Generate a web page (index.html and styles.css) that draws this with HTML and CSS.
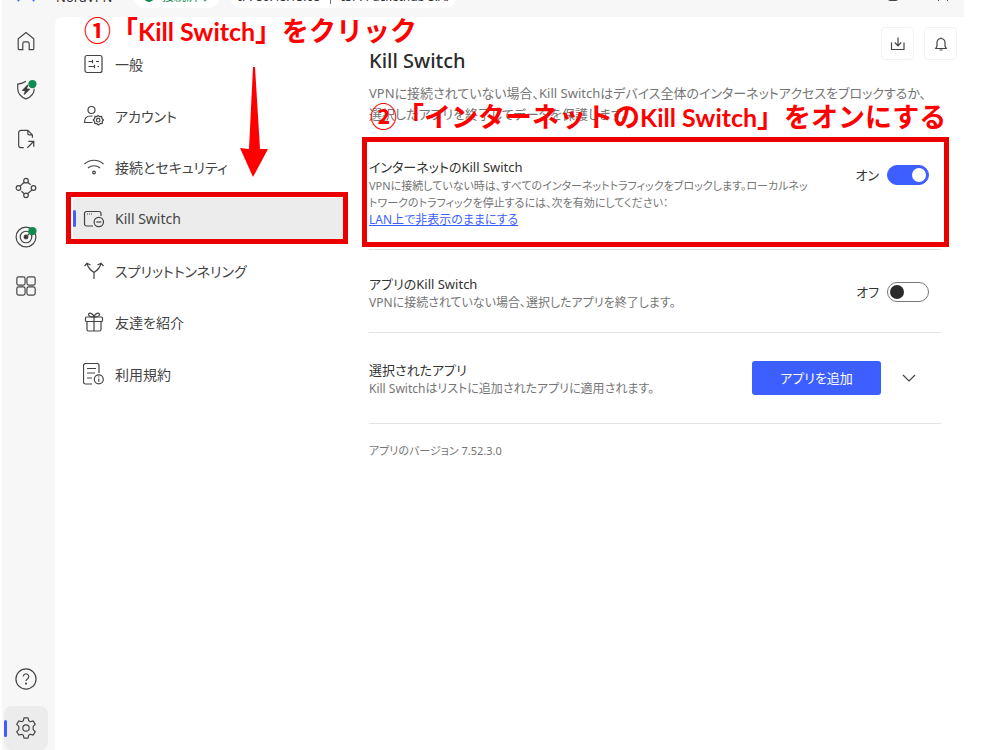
FILE: index.html
```
<!DOCTYPE html>
<html lang="ja">
<head>
    <meta charset="utf-8">
    <title>Kill Switch</title>
    <link rel="stylesheet" href="styles.css">
</head>
<body>
    <div class="window">
        <header class="titlebar">
            <svg class="logo" width="20" height="20" viewBox="0 0 20 20" fill="none" stroke="#3e5fff" stroke-width="2"><path d="M3 19A9 9 0 1 1 17 19M6 15l4-6 4 6"/></svg>
            <span class="brand">NordVPN</span>
            <span class="pill pill-status"><i class="dot"></i>接続済み</span>
            <span class="pill pill-ip"><span>IP: 86.48.13.68</span><i class="sep"></i><span>ISP: Packethub S.A.</span></span>
            <button class="win-btn" aria-label="最大化"><svg width="12" height="12" viewBox="0 0 12 12" fill="none" stroke="#444"><rect x="1.5" y="1.5" width="9" height="9" rx="1"/></svg></button>
            <button class="win-btn" aria-label="閉じる"><svg width="12" height="12" viewBox="0 0 12 12" fill="none" stroke="#444"><path d="M1 1l10 10M11 1L1 11"/></svg></button>
        </header>

        <div class="body">
            <aside class="sidebar">
                <button class="side-btn" aria-label="ホーム">
                    <svg width="24" height="24" viewBox="0 0 24 24"><path d="M3.500 20.500V9.700L12 2.800l8.500 6.900V20.500a.9.9 0 0 1-.9.9H15.500V15a2 2 0 0 0-2-2h-3a2 2 0 0 0-2 2v6.400H4.400a.9.9 0 0 1-.9-.9z"/></svg>
                </button>
                <button class="side-btn" aria-label="脅威対策">
                    <svg width="24" height="24" viewBox="0 0 24 24"><path d="M12 2.500c-2.500 1.800-5.500 2.800-9 3v5c0 5.200 3.600 9 9 11.200 5.400-2.200 9-6 9-11.200"/><path d="M14 6.500l-5.500 5.800 3.200.5-1.700 4 5.500-5.600-3.300-.6z" fill="#333"/><circle class="badge" cx="19" cy="5.500" r="4.500"/></svg>
                </button>
                <button class="side-btn" aria-label="ファイル共有">
                    <svg width="24" height="24" viewBox="0 0 24 24"><path d="M9.500 21.500h-3a2.500 2.500 0 0 1-2.500-2.500V5a2.500 2.500 0 0 1 2.500-2.500h7.500l5 5v3M14 2.500v3.500a1.500 1.500 0 0 0 1.500 1.500H19M13.500 21.500l7-7M14.500 14.500h6v6"/></svg>
                </button>
                <button class="side-btn" aria-label="メッシュネット">
                    <svg width="24" height="24" viewBox="0 0 24 24"><circle cx="12" cy="4" r="2.500"/><circle cx="3.800" cy="12" r="2.500"/><circle cx="20.200" cy="12" r="2.500"/><circle cx="12" cy="20" r="2.500"/><path d="M10.100 5.700L5.500 10M13.900 5.700L17 8.500M18.500 14l-4.700 4.300M7 15.500l3.100 2.800"/></svg>
                </button>
                <button class="side-btn" aria-label="ダークウェブモニター">
                    <svg width="24" height="24" viewBox="0 0 24 24"><circle cx="12" cy="12" r="10.800"/><circle cx="12" cy="12" r="6.300"/><circle cx="12" cy="12" r="2" fill="#333"/><path d="M12 12l5-5"/><circle class="badge" cx="19" cy="5.500" r="4.500"/></svg>
                </button>
                <button class="side-btn" aria-label="すべての機能">
                    <svg width="24" height="24" viewBox="0 0 24 24"><rect x="2" y="2" width="9" height="9" rx="2"/><rect x="13" y="2" width="9" height="9" rx="2"/><rect x="2" y="13" width="9" height="9" rx="2"/><rect x="13" y="13" width="9" height="9" rx="2"/></svg>
                </button>
                <button class="side-btn side-help" aria-label="ヘルプ">
                    <svg width="24" height="24" viewBox="0 0 24 24"><circle cx="12" cy="12" r="11"/><path d="M9 9.300a3 3 0 1 1 4.500 2.600c-1 .6-1.500 1.100-1.500 2.400"/><circle cx="12" cy="17" r=".5" fill="#333"/></svg>
                </button>
                <button class="side-btn side-active" aria-label="設定">
                    <svg width="24" height="24" viewBox="0 0 24 24"><circle cx="12" cy="12" r="3.500"/><path d="M9.800 1h4.400l.8 3.200 1.700 1 3.200-.9 2.200 3.700-2.300 2.200v3.600l2.300 2.200-2.200 3.700-3.200-.9-1.700 1-.8 3.200H9.800L9 19.800l-1.700-1-3.200.9L1.900 16l2.300-2.200v-3.600L1.900 8l2.200-3.700 3.200.9 1.700-1z" stroke-linejoin="round"/></svg>
                </button>
            </aside>

            <div class="panel">
                <nav class="menu">
                    <a class="menu-item" href="#general">
                        <svg width="22" height="22" viewBox="0 0 22 22"><rect x="2" y="2.500" width="17" height="17" rx="2"/><path d="M5.500 8.500h4M13 8.500h3M9.500 6.800v3.400M5.500 13.500h6M14.500 13.500h1.500M11.500 11.800v3.400"/></svg>
                        一般
                    </a>
                    <a class="menu-item" href="#account">
                        <svg width="22" height="22" viewBox="0 0 22 22"><circle cx="8.500" cy="5" r="3.500"/><path d="M9.500 17.500H1.500c0-4.500 2.500-6.500 6-6.500 1 0 1.500.1 2 .3"/><path d="M15 10.500l1.600 1.200 2-.2.4 2 1.500 1.500-1.300 1.500v2l-2 .1-1.700 1.400-1.700-1.300-2-.2-.2-2L10.200 15l1.500-1.500.3-2 2 .1z"/><circle cx="15.200" cy="15.200" r="1.800"/></svg>
                        アカウント
                    </a>
                    <a class="menu-item" href="#security">
                        <svg width="22" height="22" viewBox="0 0 22 22"><path d="M1.500 8c5.300-5 13.700-5 19 0M5 12c3.500-3 8.500-3 12 0"/><circle cx="11" cy="16.500" r="1.300"/></svg>
                        接続とセキュリティ
                    </a>
                    <a class="menu-item menu-active" href="#killswitch">
                        <svg width="22" height="22" viewBox="0 0 22 22"><path d="M10 18H3.500a2 2 0 0 1-2-2V5.500a2 2 0 0 1 2-2h12.500a2 2 0 0 1 2 2V8"/><path d="M4 6h5" stroke-dasharray="1 1"/><circle cx="15.800" cy="14" r="4.700"/><path d="M13.300 14h5"/></svg>
                        Kill Switch
                        <span class="mark mark-menu"></span>
                    </a>
                    <a class="menu-item" href="#split">
                        <svg width="22" height="22" viewBox="0 0 22 22"><path d="M11 19v-6.500C8 10.500 5 8 4 3.500M11 12.500c3-2 6-4.500 7-9M1.500 6L4 3.300 7.500 5M14.500 5L18 3.300 20.500 6"/></svg>
                        スプリットトンネリング
                    </a>
                    <a class="menu-item" href="#refer">
                        <svg width="22" height="22" viewBox="0 0 22 22"><rect x="2.500" y="6" width="17" height="4.500" rx="1"/><path d="M4 10.500v8a1.500 1.500 0 0 0 1.500 1.500h11a1.500 1.500 0 0 0 1.500-1.500v-8M11 6v14M11 6C9 6 5.500 5.500 5.500 3.500S10 1.500 11 6c1-4.500 5.500-4.500 5.500-2.500S13 6 11 6z"/></svg>
                        友達を紹介
                    </a>
                    <a class="menu-item" href="#terms">
                        <svg width="22" height="22" viewBox="0 0 22 22"><path d="M9 21H2.500a2 2 0 0 1-2-2V2.500a2 2 0 0 1 2-2H14a2 2 0 0 1 2 2V10M4 5.500h9M4 10h8M4 15h5"/><circle cx="15.800" cy="16.300" r="4.500"/><path d="M15.800 15.800v3M15.800 13.500v1"/></svg>
                        利用規約
                    </a>
                </nav>

                <main class="main">
                    <div class="head">
                        <h1>Kill Switch</h1>
                        <div class="head-actions">
                            <button class="square-btn" aria-label="ダウンロード"><svg width="16" height="16" viewBox="0 0 16 16"><path d="M1.500 6.500v7h12.500v-7M8 1.500v8M4.800 6.500L8 9.800l3.200-3.300"/></svg></button>
                            <button class="square-btn" aria-label="通知"><svg width="16" height="16" viewBox="0 0 16 16"><path d="M2.800 12.500h10.400L12 10V6.500a4 4 0 0 0-8 0V10zM6.500 14h3M8 1.500v1"/></svg></button>
                        </div>
                    </div>
                    <p class="lead">VPNに接続されていない場合、Kill Switchはデバイス全体のインターネットアクセスをブロックするか、<br>選択したアプリを終了してデータを保護します。</p>

                    <section class="row row-internet">
                        <div class="row-text">
                            <h2>インターネットのKill Switch</h2>
                            <p>VPNに接続していない時は、すべてのインターネットトラフィックをブロックします。ローカルネッ<br>トワークのトラフィックを停止するには、次を有効にしてください：</p>
                            <a href="#lan">LAN上で非表示のままにする</a>
                        </div>
                        <label class="control">オン<input class="toggle" type="checkbox" checked></label>
                        <span class="mark mark-row"></span>
                    </section>

                    <section class="row">
                        <div class="row-text">
                            <h2>アプリのKill Switch</h2>
                            <p>VPNに接続されていない場合、選択したアプリを終了します。</p>
                        </div>
                        <label class="control">オフ<input class="toggle" type="checkbox"></label>
                    </section>

                    <section class="row row-apps">
                        <div class="row-text">
                            <h2>選択されたアプリ</h2>
                            <p>Kill Switchはリストに追加されたアプリに適用されます。</p>
                        </div>
                        <div class="control">
                            <button class="add-btn">アプリを追加</button>
                            <button class="expand-btn" aria-label="展開"><svg width="16" height="16" viewBox="0 0 16 16"><path d="M2 5l6 6 6-6"/></svg></button>
                        </div>
                    </section>

                    <p class="version">アプリのバージョン 7.52.3.0</p>
                </main>
            </div>
        </div>
    </div>

    <!-- 操作手順の注釈 -->
    <p class="note note-first">①「<span>Kill Switch</span>」をクリック</p>
    <p class="note note-second">②「インターネットの<span>Kill Switch</span>」をオンにする</p>
    <svg class="arrow" width="28" height="110" viewBox="0 0 28 110"><path d="M13 0h2l5 82h8L13 110 0 81l9 1z" fill="#f00"/></svg>
</body>
</html>
```
FILE: styles.css
```
* {
    box-sizing: border-box;
}
body {
    margin: 0;
    background: #fff;
    color: #333;
    font-family: "Noto Sans", "Noto Sans CJK JP", sans-serif;
    font-size: 14px;
    font-feature-settings: "palt";
}
h1, h2, p {
    margin: 0;
    font-weight: 400;
}
button {
    padding: 0;
    border: 0;
    background: none;
    font: inherit;
    color: inherit;
}
svg {
    flex: none;
}
.window {
    display: flex;
    flex-direction: column;
    min-height: 100vh;
    margin: 0 36px 0 2px;
    background: #f7f7f7;
}

/* タイトルバー */
.titlebar {
    display: flex;
    align-items: flex-end;
    height: 17px;
    padding: 0 15px 9px 14px;
    overflow: hidden;
    font-size: 12px;
    line-height: 22px;
    white-space: nowrap;
}
.logo {
    margin: 0 20px 6px 0;
}
.brand {
    width: 77px;
    font-size: 13px;
}
.pill {
    display: flex;
    align-items: center;
    height: 24px;
    margin-right: 10px;
    padding: 2px 8px 0;
    border-radius: 12px;
    background: #fff;
}
.pill-status {
    gap: 8px;
    width: 87px;
    padding-left: 11px;
    color: #0f8a50;
}
.dot {
    width: 10px;
    height: 10px;
    border-radius: 50%;
    background: #0f8a50;
}
.pill-ip {
    gap: 10px;
    margin-right: auto;
}
.sep {
    width: 1px;
    height: 14px;
    background: #777;
}
.win-btn {
    display: flex;
    margin: 0 0 6px 38px;
}

.body {
    display: flex;
    flex: 1;
}

/* 左のアイコン列 */
.sidebar {
    display: flex;
    flex: none;
    flex-direction: column;
    gap: 5px;
    width: 53px;
    padding: 2px 7px 0 2px;
}
.side-btn {
    position: relative;
    display: flex;
    align-items: center;
    justify-content: center;
    height: 44px;
    border-radius: 8px;
}
.side-btn svg {
    width: 22px;
    height: 22px;
    fill: none;
    stroke: #444;
    stroke-width: 1.3;
}
.side-btn .badge {
    fill: #0f8a50;
    stroke: none;
}
.side-help {
    margin-top: auto;
}
.side-active {
    background: #ececec;
}
.side-active::before,
.menu-active::before {
    content: "";
    position: absolute;
    left: 0;
    width: 3px;
    height: 17px;
    border-radius: 2px;
    background: #3e5fff;
}

.panel {
    display: flex;
    flex: 1;
    gap: 25px;
    min-width: 0;
    padding: 0 7px 0 18px;
    border-top-left-radius: 8px;
    background: #fff;
}

/* 設定メニュー */
.menu {
    display: flex;
    flex-direction: column;
    flex: none;
    justify-content: space-between;
    width: 271px;
    height: 378px;
    padding-top: 26px;
}
.menu-item {
    position: relative;
    display: flex;
    align-items: center;
    gap: 10px;
    height: 42px;
    padding-left: 10px;
    border-radius: 4px;
    color: #444;
    text-decoration: none;
}
.menu-item svg,
.main svg {
    fill: none;
    stroke: #444;
    stroke-width: 1.2;
}
.menu-active {
    background: #ececec;
}

/* 設定内容 */
.main {
    flex: 1;
    min-width: 0;
    padding-top: 10px;
    color: #757575;
    font-size: 12px;
    line-height: 17px;
}
.head {
    display: flex;
    align-items: flex-start;
    justify-content: space-between;
}
.head h1 {
    padding-top: 19px;
    color: #2b2b2b;
    font-size: 20px;
    font-weight: 500;
    line-height: 30px;
}
.head-actions {
    display: flex;
    gap: 10px;
}
.square-btn {
    display: flex;
    align-items: center;
    justify-content: center;
    width: 33px;
    height: 33px;
    border: 1px solid #f3f3f3;
    border-radius: 4px;
}
.lead {
    margin-top: 7px;
    font-size: 13px;
    line-height: 21px;
    white-space: nowrap;
}
.row {
    position: relative;
    display: flex;
    align-items: flex-start;
    justify-content: space-between;
    margin-right: 16px;
    padding: 24px 12px 21px 0;
    border-bottom: 1px solid #e3e3e3;
}
.row-internet {
    padding-top: 32px;
}
.row-internet p {
    font-size: 11px;
}
.row-apps {
    padding-top: 27px;
    padding-bottom: 26px;
}
.row h2 {
    color: #333;
    font-size: 13px;
    line-height: 20px;
}
.row-text {
    white-space: nowrap;
}
.row-text a {
    display: block;
    color: #3e5fff;
}
.control {
    display: flex;
    align-items: center;
    gap: 8px;
    height: 36px;
    color: #333;
    font-size: 13px;
}
.toggle {
    appearance: none;
    display: flex;
    align-items: center;
    width: 42px;
    height: 20px;
    margin: 0;
    padding: 0 2px;
    border: 1px solid #777;
    border-radius: 10px;
    background: #fff;
}
.toggle::before {
    content: "";
    width: 14px;
    height: 14px;
    border-radius: 50%;
    background: #2b2b2b;
}
.toggle:checked {
    justify-content: flex-end;
    border-color: #3e5fff;
    background: #3e5fff;
}
.toggle:checked::before {
    background: #fff;
}
.add-btn {
    width: 129px;
    height: 34px;
    border-radius: 3px;
    background: #3e5fff;
    color: #fff;
}
.expand-btn {
    display: flex;
    justify-content: center;
    width: 40px;
}
.version {
    padding-top: 18px;
    font-size: 11px;
}

/* 注釈 */
.mark {
    position: absolute;
    border: 5px solid #eb0000;
}
.mark-menu {
    inset: -6px -4px -4px -7px;
}
.mark-row {
    inset: 12px -8px 2px -7px;
}
.note {
    position: absolute;
    color: #f00;
    font-family: "Noto Sans CJK JP", sans-serif;
    font-feature-settings: normal;
    font-size: 27px;
    font-weight: 700;
    line-height: 30px;
    white-space: nowrap;
}
.note span {
    font-family: Lato, sans-serif;
    font-size: 25px;
}
.note-first {
    left: 84px;
    top: 15px;
}
.note-second {
    left: 370px;
    top: 101px;
}
.arrow {
    position: absolute;
    left: 240px;
    top: 67px;
}
```
